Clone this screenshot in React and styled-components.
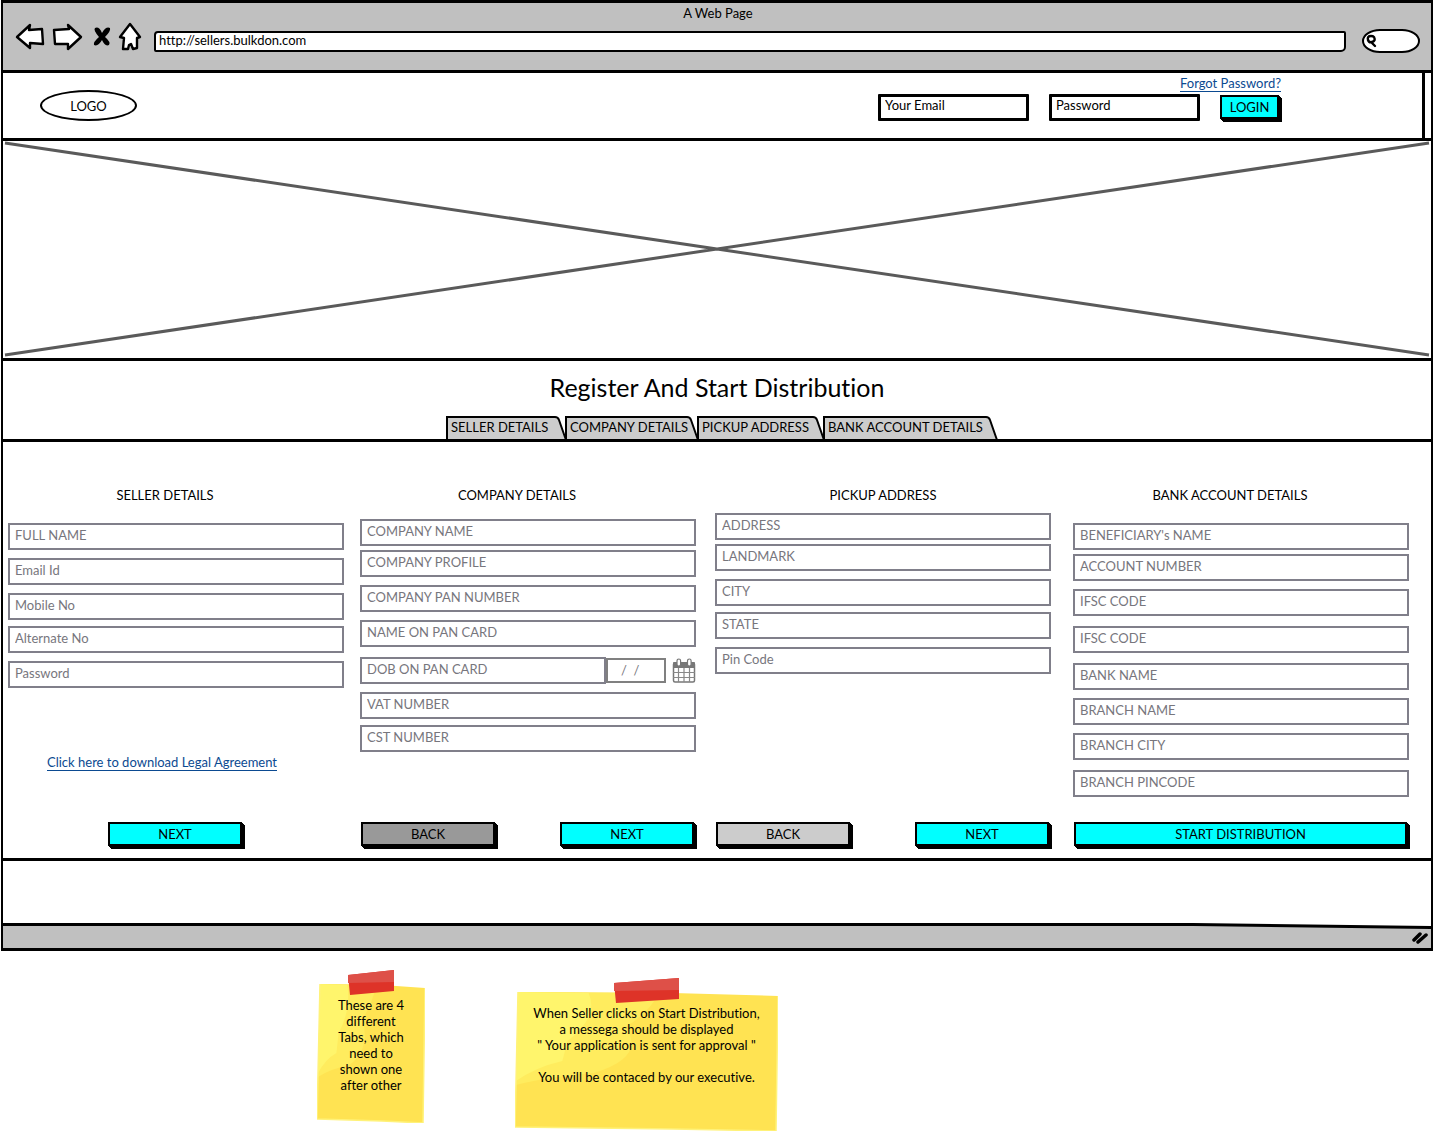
import React from "react";
import styled, { createGlobalStyle } from "styled-components";

const GlobalStyle = createGlobalStyle`
  *, *::before, *::after { box-sizing: border-box; }
  body { margin: 0; background: #fff; color: #000; }
  body, input, button {
    font-family: Lato, "Liberation Sans", sans-serif;
    font-size: 13px;
    line-height: 16px;
    font-variant-ligatures: none;
  }
  h1, h2, p { margin: 0; font-weight: 400; }
`;

const Window = styled.div`
  margin: 0 1px;
  border: solid #000;
  border-width: 3px 2px 0;
`;

const Chrome = styled.header`
  height: 70px;
  padding: 2px 11px 0 13px;
  background: #c0c0c0;
  border-bottom: 3px solid #000;
`;

const PageTitle = styled.p`
  text-align: center;
`;

const Toolbar = styled.div`
  display: flex;
  align-items: center;
  height: 32px;
`;

const NavButtons = styled.nav`
  display: flex;
  align-items: center;
  flex: none;
  width: 138px;
`;

const IconButton = styled.button`
  display: block;
  padding: 0;
  border: 0;
  background: none;
  svg { display: block; overflow: visible; }
`;

const AddressInput = styled.input`
  flex: 1;
  min-width: 0;
  height: 21px;
  margin-top: 8px;
  padding: 0 3px 2px;
  border: 2px solid #000;
  border-radius: 4px 2px 5px 2px;
  background: #fff;
`;

const SearchBox = styled.label`
  display: flex;
  align-items: center;
  width: 58px;
  height: 24px;
  margin: 8px 0 0 16px;
  padding-left: 2px;
  border: 2px solid #000;
  border-radius: 18px / 12px;
  background: #fff;
  svg { flex: none; }
`;

const SearchInput = styled.input`
  width: 36px;
  height: 16px;
  padding: 0;
  border: 0;
  background: none;
  outline: none;
`;

const SiteHeader = styled.div`
  display: flex;
  align-items: center;
  height: 65px;
  margin-right: 6px;
  padding: 0 141px 0 37px;
  border-right: 3px solid #000;
`;

const Logo = styled.div`
  display: grid;
  place-items: center;
  width: 97px;
  height: 31px;
  margin-right: auto;
  border: 2px solid #000;
  border-radius: 50%;
`;

const LoginForm = styled.form`
  display: grid;
  grid-template-columns: 151px 151px 61px;
  column-gap: 20px;
  row-gap: 2px;
  margin-bottom: 16px;
`;

const ForgotRow = styled.div`
  grid-column: 1 / -1;
  justify-self: end;
`;

const Link = styled.a`
  color: #0b4a91;
  text-decoration: none;
  border-bottom: 1px solid #0b4a91;
  display: inline-block;
  line-height: 15px;
`;

const LoginInput = styled.input`
  width: 100%;
  height: 27px;
  padding: 0 4px 4px;
  border: 3px solid #000;
  border-radius: 1px;
  &::placeholder { color: #000; opacity: 1; }
`;

const Button = styled.button`
  width: ${(p) => p.$width || "100%"};
  height: 24px;
  padding: 0;
  border: 2px solid #000;
  background: ${(p) => p.$fill || "#00ffff"};
  color: #000;
  box-shadow: 1px 1px 0 #000, 2px 2px 0 #000, 3px 3px 0 #000;
  white-space: nowrap;
`;

const LoginButton = styled(Button)`
  align-self: center;
`;

const Hero = styled.div`
  height: 223px;
  margin: 0 -2px;
  border: solid #000;
  border-width: 3px 2px;
  svg { display: block; width: 100%; height: 100%; }
`;

const TitleBand = styled.div`
  display: flex;
  flex-direction: column;
  align-items: center;
  justify-content: space-between;
  height: 78px;
  padding-top: 11px;
`;

const Heading = styled.h1`
  font-size: 25px;
  line-height: 30px;
`;

const Tabs = styled.div`
  display: flex;
  padding-left: 8px;
`;

const Tab = styled.button`
  position: relative;
  width: ${(p) => p.$width}px;
  height: 23px;
  padding: 0 0 2px 5px;
  border: 0;
  background: none;
  text-align: left;
  white-space: nowrap;
  svg { position: absolute; inset: 0; width: 100%; height: 100%; z-index: -1; overflow: visible; }
`;

const Panel = styled.main`
  display: grid;
  grid-template-columns: 352fr 355fr 358fr 336fr;
  height: 422px;
  margin: 0 -2px;
  padding: 45px 22px 12px 5px;
  border: solid #000;
  border-width: 3px 2px;
`;

const Column = styled.section`
  display: flex;
  flex-direction: column;
  padding-right: ${(p) => p.$gutter}px;
`;

const ColumnTitle = styled.h2`
  padding-right: ${(p) => (p.$centered ? 0 : 22)}px;
  text-align: center;
  font-size: 13px;
  line-height: 16px;
  margin-bottom: ${(p) => p.$space}px;
`;

const gaps = { none: 0, small: 4, medium: 6, regular: 8, large: 10 };

const FieldRow = styled.div`
  display: flex;
  align-items: center;
  margin-bottom: ${(p) => gaps[p.$gap]}px;
`;

const Field = styled.input`
  flex: 1;
  min-width: 0;
  width: 100%;
  height: 27px;
  padding: 0 5px 4px;
  border: 2px solid #807f8a;
  background: #fff;
  &::placeholder { color: #77767d; opacity: 1; }
`;

const DateField = styled(Field)`
  flex: none;
  width: 60px;
  height: 25px;
  padding: 0 0 2px 13px;
  border-color: #808080;
`;

const CalendarButton = styled(IconButton)`
  margin-left: 6px;
`;

const LinkRow = styled.div`
  margin-top: 66px;
  padding-left: 39px;
`;

const Actions = styled.div`
  display: flex;
  justify-content: ${(p) => (p.$single ? "flex-start" : "space-between")};
  margin-top: auto;
  padding: 0 2px 0 ${(p) => (p.$single ? 100 : 1)}px;
`;

const PageEnd = styled.div`
  height: 62px;
`;

const StatusBar = styled.footer`
  position: relative;
  display: flex;
  justify-content: flex-end;
  align-items: center;
  height: 28px;
  padding: 2px 2px 0 0;
  background: #c0c0c0;
  border-bottom: 3px solid #000;
`;

const StatusEdge = styled.svg`
  position: absolute;
  top: 0;
  left: 0;
  width: 100%;
  height: 8px;
`;

const Notes = styled.aside`
  display: flex;
  align-items: flex-start;
  gap: 90px;
  padding: 18px 0 0 317px;
`;

const Note = styled.div`
  position: relative;
  width: ${(p) => p.$width}px;
  height: 154px;
  margin-top: ${(p) => p.$drop || 0}px;
  padding-top: 28px;
  text-align: center;
`;

const NoteArt = styled.svg`
  position: absolute;
  inset: 0;
  width: 100%;
  height: 100%;
  z-index: -1;
`;

const NoteText = styled.p`
  white-space: pre-line;
`;

const ink = { stroke: "#000", strokeWidth: 2.4, strokeLinejoin: "round", strokeLinecap: "round" };

function TabItem({ width, children }) {
  return (
    <Tab type="button" role="tab" $width={width}>
      <svg viewBox={`0 0 ${width} 23`} preserveAspectRatio="none" aria-hidden="true">
        <path
          d={`M1 24 V1 H${width - 10} Q${width - 7} 1 ${width - 6} 4 L${width + 1} 24`}
          fill="#ccc"
          stroke="#000"
          strokeWidth="2"
        />
      </svg>
      {children}
    </Tab>
  );
}

function CalendarIcon() {
  return (
    <svg width="24" height="26" viewBox="0 0 24 26" aria-hidden="true">
      <rect x="1.500" y="5" width="21" height="19" rx="1.500" fill="#fff" stroke="#777" strokeWidth="1.500" />
      <path d="M1 5 Q1 4 2 4 H22 Q23 4 23 5 V10 H1 Z" fill="#777" />
      <path d="M6.500 10v14M12 10v14M17.500 10v14M1 14.500h22M1 19.500h22" stroke="#888" strokeWidth="1.200" />
      <rect x="5" y="1" width="3.600" height="7" rx="1.800" fill="#fff" stroke="#777" strokeWidth="1.200" />
      <rect x="15.500" y="1" width="3.600" height="7" rx="1.800" fill="#fff" stroke="#777" strokeWidth="1.200" />
    </svg>
  );
}

const columns = [
  {
    title: "SELLER DETAILS",
    gutter: 16,
    space: 20,
    fields: [
      ["FULL NAME", "regular"],
      ["Email Id", "regular"],
      ["Mobile No", "medium"],
      ["Alternate No", "regular"],
      ["Password", "none"],
    ],
    link: "Click here to download Legal Agreement",
    actions: [{ label: "NEXT" }],
  },
  {
    title: "COMPANY DETAILS",
    gutter: 19,
    space: 16,
    fields: [
      ["COMPANY NAME", "small"],
      ["COMPANY PROFILE", "regular"],
      ["COMPANY PAN NUMBER", "regular"],
      ["NAME ON PAN CARD", "large"],
      ["DOB ON PAN CARD", "regular", "date"],
      ["VAT NUMBER", "medium"],
      ["CST NUMBER", "none"],
    ],
    actions: [{ label: "BACK", fill: "#999" }, { label: "NEXT" }],
  },
  {
    title: "PICKUP ADDRESS",
    centered: true,
    gutter: 22,
    space: 10,
    fields: [
      ["ADDRESS", "small"],
      ["LANDMARK", "regular"],
      ["CITY", "medium"],
      ["STATE", "regular"],
      ["Pin Code", "none"],
    ],
    actions: [{ label: "BACK", fill: "#ccc" }, { label: "NEXT" }],
  },
  {
    title: "BANK ACCOUNT DETAILS",
    gutter: 0,
    space: 20,
    fields: [
      ["BENEFICIARY's NAME", "small"],
      ["ACCOUNT NUMBER", "regular"],
      ["IFSC CODE", "large"],
      ["IFSC CODE", "large"],
      ["BANK NAME", "regular"],
      ["BRANCH NAME", "regular"],
      ["BRANCH CITY", "large"],
      ["BRANCH PINCODE", "none"],
    ],
    actions: [{ label: "START DISTRIBUTION", wide: true }],
  },
];

function DetailsColumn({ column }) {
  return (
    <Column $gutter={column.gutter}>
      <ColumnTitle $space={column.space} $centered={column.centered}>
        {column.title}
      </ColumnTitle>
      {column.fields.map(([label, gap, kind], i) => (
        <FieldRow key={i} $gap={gap}>
          <Field
            type={label === "Password" ? "password" : "text"}
            placeholder={label}
            aria-label={label}
          />
          {kind === "date" && (
            <>
              <DateField type="text" placeholder="/  /" aria-label="Date" />
              <CalendarButton type="button" aria-label="Choose date">
                <CalendarIcon />
              </CalendarButton>
            </>
          )}
        </FieldRow>
      ))}
      {column.link && (
        <LinkRow>
          <Link href="#agreement">{column.link}</Link>
        </LinkRow>
      )}
      <Actions $single={column.actions.length === 1 && !column.actions[0].wide}>
        {column.actions.map((a) => (
          <Button key={a.label} type="button" $fill={a.fill} $width={a.wide ? "100%" : "134px"}>
            {a.label}
          </Button>
        ))}
      </Actions>
    </Column>
  );
}

function StickyNote({ width, drop, tape, children }) {
  const w = width;
  return (
    <Note $width={w} $drop={drop}>
      <NoteArt viewBox={`0 0 ${w} 154`} aria-hidden="true">
        <path d={`M3 15 L${w * 0.6} 16 L${w} 19 L${w - 2} 154 L${w * 0.6} 152 L0 150 Z`} fill="#ffe352" />
        <path d={`M3 15 L${w * 0.55} 16 Q${w * 0.5} 38 ${w * 0.42} 50 Q${w * 0.5} 80 ${w * 0.3} 96 Q${w * 0.12} 100 1 108 Z`} fill="#ffec5e" />
        <path d={`M3 15 L${w * 0.28} 16 Q${w * 0.32} 40 ${w * 0.2} 64 L${w * 0.18} 84 Q${w * 0.08} 90 1 104 Z`} fill="#fff56c" />
        <path d={`M3 15 L0 150 L${w * 0.6} 152 L${w - 2} 154 L${w} 19`} fill="none" stroke="#fff27a" strokeWidth="1.500" />
        <path d={`M${tape[0]} 6 L${tape[1]} 1 V22 L${tape[0] + 2} 26 Z`} fill="#de3328" />
        <path d={`M${tape[0]} 6 L${tape[1]} 1 V13 L${tape[0]} 14 Z`} fill="#de5048" />
      </NoteArt>
      <NoteText>{children}</NoteText>
    </Note>
  );
}

export default function App() {
  return (
    <>
      <GlobalStyle />
      <Window>
        <Chrome>
          <PageTitle>A Web Page</PageTitle>
          <Toolbar>
            <NavButtons aria-label="Browser">
              <IconButton type="button" aria-label="Back">
                <svg width="36" height="30" viewBox="0 0 36 30">
                  <path d="M1 15 L14 3 L13 8 L26 7 L27 22 L14 21 V26 Z" fill="#fff" {...ink} />
                </svg>
              </IconButton>
              <IconButton type="button" aria-label="Forward">
                <svg width="40" height="30" viewBox="0 0 40 30">
                  <path d="M2 8 L17 7 L16 3 L29 15 L16 27 V22 L3 22 Z" fill="#fff" {...ink} />
                </svg>
              </IconButton>
              <IconButton type="button" aria-label="Stop">
                <svg width="27" height="30" viewBox="0 0 27 30">
                  <path d="M3 6 Q7 4 10 11 Q14 4 18 6 Q19 9 13 15 Q19 20 17 23 Q13 25 10 18 Q6 25 2 23 Q1 20 7 15 Q1 8 3 6 Z" />
                </svg>
              </IconButton>
              <IconButton type="button" aria-label="Home">
                <svg width="24" height="30" viewBox="0 0 24 30">
                  <path d="M11 2 L1 15 L5 16 L4 27 L9 27 L10 23 L12 22 L14 27 L18 26 V16 L21 15 Z" fill="#fff" {...ink} />
                </svg>
              </IconButton>
            </NavButtons>
            <AddressInput type="text" aria-label="Address" defaultValue="http://sellers.bulkdon.com" />
            <SearchBox>
              <svg width="12" height="14" viewBox="0 0 12 14" aria-hidden="true">
                <path d="M5 2 Q1 2 2 6 Q3 9 6 8 Q10 7 8 3 Q7 2 5 2 M6 9 L9 12" fill="none" {...ink} />
              </svg>
              <SearchInput type="text" aria-label="Search" />
            </SearchBox>
          </Toolbar>
        </Chrome>
        <SiteHeader>
          <Logo>LOGO</Logo>
          <LoginForm>
            <ForgotRow>
              <Link href="#forgot">Forgot Password?</Link>
            </ForgotRow>
            <LoginInput type="email" placeholder="Your Email" aria-label="Your Email" />
            <LoginInput type="password" placeholder="Password" aria-label="Password" />
            <LoginButton type="button" $width="59px">LOGIN</LoginButton>
          </LoginForm>
        </SiteHeader>
        <Hero>
          <svg viewBox="0 0 1428 217" preserveAspectRatio="none" aria-hidden="true">
            <path d="M2 2 L1426 214 M2 214 L1426 2" stroke="#5a5a5a" strokeWidth="3" fill="none" />
          </svg>
        </Hero>
        <TitleBand>
          <Heading>Register And Start Distribution</Heading>
          <Tabs role="tablist">
            <TabItem width={119}>SELLER DETAILS</TabItem>
            <TabItem width={132}>COMPANY DETAILS</TabItem>
            <TabItem width={126}>PICKUP ADDRESS</TabItem>
            <TabItem width={173}>BANK ACCOUNT DETAILS</TabItem>
          </Tabs>
        </TitleBand>
        <Panel>
          {columns.map((c) => (
            <DetailsColumn key={c.title} column={c} />
          ))}
        </Panel>
        <PageEnd />
        <StatusBar>
          <StatusEdge viewBox="0 0 1428 8" preserveAspectRatio="none" aria-hidden="true">
            <path d="M0 0 H1428 V4 L1190 1 L0 1 Z" fill="#fff" />
            <path d="M0 1.500 L1190 1.500 L1428 4.500" fill="none" stroke="#000" strokeWidth="3" />
          </StatusEdge>
          <svg width="18" height="14" viewBox="0 0 18 14" aria-hidden="true">
            <path d="M3 10 L9 4 M7 12 L15 5" fill="none" stroke="#000" strokeWidth="3.500" strokeLinecap="round" />
          </svg>
        </StatusBar>
      </Window>
      <Notes>
        <StickyNote width={108} tape={[31, 77]}>
          {"These are 4\ndifferent\nTabs, which\nneed to\nshown one\nafter other"}
        </StickyNote>
        <StickyNote width={263} drop={8} tape={[99, 164]}>
          {'When Seller clicks on Start Distribution,\na messega should be displayed\n" Your application is sent for approval "\n\nYou will be contaced by our executive.'}
        </StickyNote>
      </Notes>
    </>
  );
}
